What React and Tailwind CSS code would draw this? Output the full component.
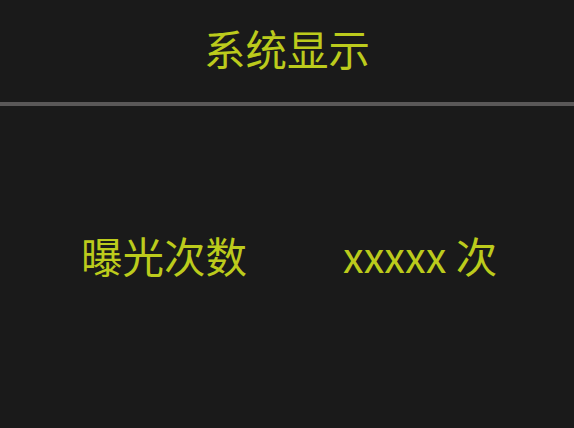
import React from "react";

export default function App() {
    return (
        <div className="w-[574px] h-[428px] bg-[#1a1a1a] flex flex-col font-['Noto_Sans_CJK_SC',sans-serif] text-[#bccb1c]">
            <div className="h-[102px] flex items-center justify-center pb-[4px]">
                <span className="text-[41.5px] leading-none">系统显示</span>
            </div>
            <div className="h-[4px] bg-[#5a5858]" />
            <div className="flex-1 flex items-center pb-[22px]">
                <span className="text-[41.5px] leading-none ml-[81px] w-[262px]">曝光次数</span>
                <span className="text-[41.5px] leading-none">xxxxx 次</span>
            </div>
        </div>
    )
}
